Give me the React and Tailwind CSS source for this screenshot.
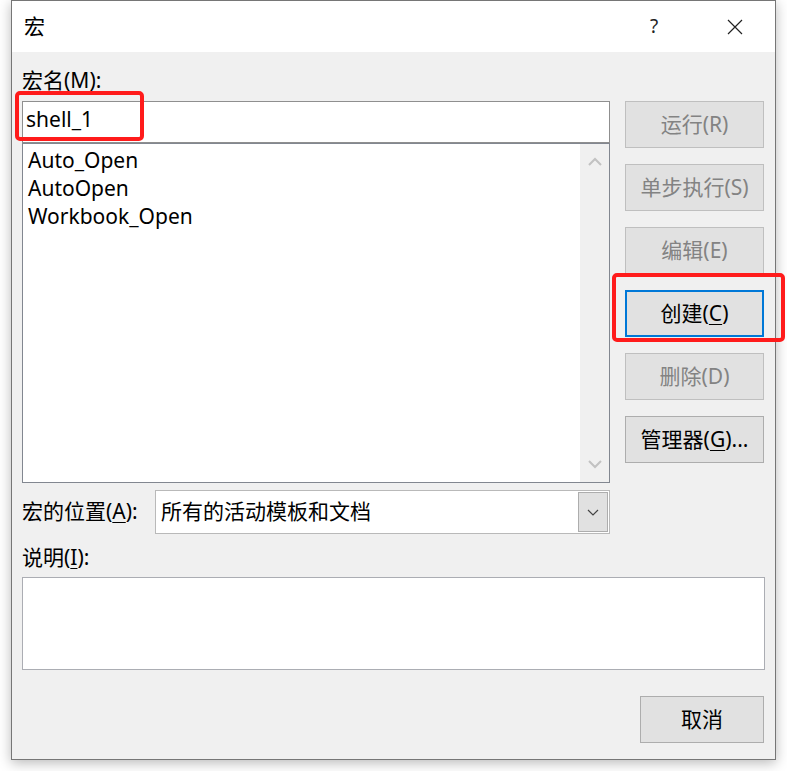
import React from 'react';

const font = "font-['Noto_Sans','Noto_Sans_CJK_SC',sans-serif]";

function Btn({ children, disabled, focused, wide = true }) {
  return (
    <div
      className={`flex h-[47px] items-center justify-center text-[21px] ${wide ? 'w-[139px]' : 'w-[124px]'} ${
        focused
          ? 'border-2 border-[#0078d7] bg-[#e1e1e1] text-black'
          : disabled
          ? 'border border-[#bfbfbf] bg-[#e1e1e1] text-[#838383]'
          : 'border border-[#adadad] bg-[#e1e1e1] text-black'
      }`}
    >
      {children}
    </div>
  );
}

const U = ({ children }) => <span className="underline underline-offset-[3px] decoration-1">{children}</span>;

function Chevron({ down }) {
  return (
    <svg width="14" height="9" viewBox="0 0 14 9">
      <path d={down ? 'M1 1 L7 7 L13 1' : 'M1 8 L7 2 L13 8'} fill="none" stroke="currentColor" strokeWidth="2" />
    </svg>
  );
}

export default function App() {
  return (
    <div className={`relative h-[771px] w-[787px] overflow-hidden bg-white ${font}`}>
      <div className="ml-[11px] flex h-[760px] w-[765px] flex-col border border-[#767676] bg-[#f0f0f0] shadow-[0_3px_12px_rgba(0,0,0,0.28)]">
        {/* Title bar */}
        <div className="flex h-[51px] items-center bg-white pl-[12px] text-[21px] text-black">
          <span className="flex-1">宏</span>
          <span className="w-[20px] text-center text-[19px] text-[#222]">?</span>
          <div className="ml-[31px] flex w-[80px] items-center justify-center">
            <svg width="16" height="16" viewBox="0 0 16 16">
              <path d="M1 1 L15 15 M15 1 L1 15" stroke="#222" strokeWidth="1.2" />
            </svg>
          </div>
        </div>

        {/* Body */}
        <div className="flex flex-1 flex-col px-[10px]">
          <div className="flex gap-[15px]">
            <div className="flex w-[588px] flex-col">
              <div className="h-[49px] pt-[14px] text-[21px] leading-[28px] text-black">
                宏名(<U>M</U>):
              </div>
              <div className="flex h-[42px] items-center border border-[#8f8f8f] bg-white pb-[4px] pl-[3px] text-[21px] text-black">
                shell_1
              </div>
              <div className="flex h-[340px] border border-[#828790] bg-white">
                <div className="flex-1 py-[2px] pl-[5px] text-[21px] leading-[28px] text-black">
                  <div>Auto_Open</div>
                  <div>AutoOpen</div>
                  <div>Workbook_Open</div>
                </div>
                <div className="flex w-[29px] flex-col items-center justify-between bg-[#f0f0f0] py-[13px] text-[#c2c2c2]">
                  <Chevron />
                  <Chevron down />
                </div>
              </div>
              <div className="mt-[7px] flex h-[44px] items-center">
                <span className="w-[133px] text-[21px] text-black">
                  宏的位置(<U>A</U>):
                </span>
                <div className="flex h-[44px] flex-1 items-center border border-[#b9b9b9] bg-white p-[1px]">
                  <span className="flex-1 pl-[4px] text-[21px] text-black">所有的活动模板和文档</span>
                  <div className="flex h-[40px] w-[30px] items-center justify-center border border-[#adadad] bg-[#e1e1e1] text-[#444]">
                    <svg width="12" height="7" viewBox="0 0 12 7">
                      <path d="M1 1 L6 6 L11 1" fill="none" stroke="currentColor" strokeWidth="1.2" />
                    </svg>
                  </div>
                </div>
              </div>
            </div>

            <div className="flex w-[140px] flex-col gap-[16px] pt-[49px]">
              <Btn disabled>运行(R)</Btn>
              <Btn disabled>单步执行(S)</Btn>
              <Btn disabled>编辑(E)</Btn>
              <Btn focused>
                创建(<U>C</U>)
              </Btn>
              <Btn disabled>删除(D)</Btn>
              <Btn>
                管理器(<U>G</U>)...
              </Btn>
            </div>
          </div>

          <div className="h-[43px] pt-[9px] text-[21px] leading-[28px] text-black">
            说明(<U>I</U>):
          </div>
          <div className="h-[93px] border border-[#abadb3] bg-white"></div>

          <div className="flex justify-end pt-[26px] pr-[1px]">
            <Btn wide={false}>取消</Btn>
          </div>
        </div>
      </div>

      {/* red annotation boxes */}
      <div className="absolute left-[15px] top-[91px] h-[50px] w-[129px] rounded-[5px] border-[4px] border-[#ff1b1b]"></div>
      <div className="absolute left-[612px] top-[273px] h-[69px] w-[173px] rounded-[5px] border-[4px] border-[#ff1b1b]"></div>
    </div>
  );
}
